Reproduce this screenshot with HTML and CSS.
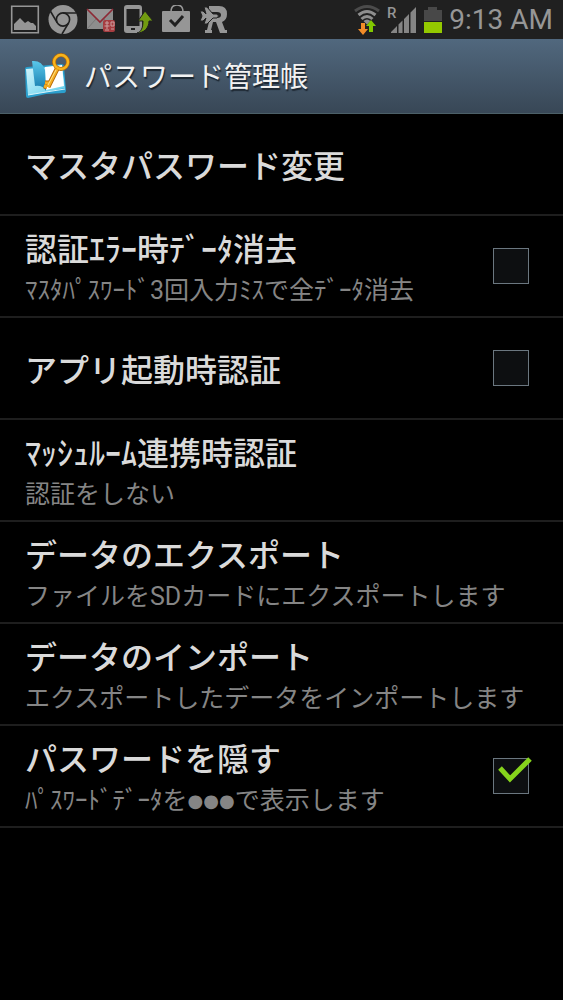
FILE: index.html
```html
<!DOCTYPE html>
<html lang="ja">
<head>
<meta charset="utf-8">
<meta name="viewport" content="width=device-width, initial-scale=1">
<title>パスワード管理帳</title>
<link rel="stylesheet" href="styles.css">
</head>
<body>
<div class="statusbar">
  <div class="notifications">
    <svg width="30" height="30" viewBox="0 0 30 30" aria-hidden="true"><path d="M1.7 1.200h26.600v26.600H1.700z" fill="none" stroke="#969696" stroke-width="1.6"/><path d="M4 25v-6l6-6 5 5 3-2 3 2h2l3 3v4z" fill="#969696"/></svg>
    <svg width="30" height="30" viewBox="0 0 30 30" aria-hidden="true"><circle cx="15" cy="14.500" r="14.500" fill="#969696"/><g fill="none" stroke="#202020" stroke-width="1.6"><circle cx="15" cy="14.500" r="6.600"/><path d="M15 8h13.500M9.300 17.800 2.600 6.500M20.700 17.800 14 29"/></g><circle cx="15" cy="14.500" r="4.600" fill="#969696"/></svg>
    <svg width="30" height="30" viewBox="0 0 30 30" aria-hidden="true"><path d="M1 4h26v20H1z" fill="#8d8d8d"/><path d="m1 24 9-10M27 24l-9-10" stroke="#777" fill="none"/><path d="m1 4 13 13L27 4" fill="#979797" stroke="#8d2935" stroke-width="1.6"/><rect x="17" y="15" width="12" height="12" rx="2" fill="#a63c40"/><path d="M19 18h4M21 16v8M18.500 21h5M19 25h4M25 17h3v4h-3zM25 24h3" stroke="#c9a0a0" fill="none"/></svg>
    <svg width="30" height="30" viewBox="0 0 30 30" aria-hidden="true"><path d="M3 0h12q3 0 3 3v22q0 3-3 3H3q-3 0-3-3V3q0-3 3-3zM2.500 4v17h13V4z" fill="#969696" fill-rule="evenodd"/><path d="M7 24h4" stroke="#202020" stroke-width="2"/><path d="M13 28c4-1 6-5 6-12h-5l7-10 8 10h-4c0 7-5 12-12 12z" fill="#719b10" stroke="#202020"/></svg>
    <svg width="30" height="30" viewBox="0 0 30 30" aria-hidden="true"><path d="M9 7q0-7 6-7t6 7" fill="none" stroke="#969696" stroke-width="1.5"/><rect x="0" y="6" width="28" height="21" rx="1" fill="#969696"/><path d="m8 15 5 5 8-9" fill="none" stroke="#202020" stroke-width="3"/></svg>
    <svg width="30" height="30" viewBox="0 0 30 30" aria-hidden="true"><path d="M9 1h10q8 0 8 8 0 6-5 8l3 8h2v3h-7l-4-11h-3l-2 8h1v3H5v-3h2l3-12h7q4 0 4-3t-4-3H9z" fill="#969696"/><path d="M0 6h3l3 3-2-7h3l6 7h4q3 2 0 4h-4l-6 6H4l2-6-3 3H0l2-5z" fill="#969696" stroke="#202020"/></svg>
  </div>
  <div class="system">
    <svg width="28" height="32" viewBox="0 0 28 32" aria-hidden="true"><g fill="none" stroke-width="3"><path d="M2 7q12-9 24 0" stroke="#4b4b4b"/><path d="M5.500 11q8.500-7 17 0" stroke="#8e8e8e"/><path d="M8.500 15q5.500-5 11 0" stroke="#8e8e8e"/></g><path d="M10.500 17q3.500-3 7 0L14 20.500z" fill="#8e8e8e"/><path d="M8 19h4v6h3l-5 6-5-6h3z" fill="#f28c28"/><path d="M16 28h4v-6h3l-5-6-5 6h3z" fill="#82c800"/></svg>
    <svg class="signal" width="30" height="32" viewBox="0 0 30 32" aria-hidden="true"><text x="0" y="14" class="roaming">R</text><path d="M4 29v-1l6-6v7zM11.500 29v-8.500l4-4V29zM17 29V15l5-5v19zM23.500 29V8.500L29 3v26z" fill="#858585"/></svg>
    <svg width="20" height="32" viewBox="0 0 20 32" aria-hidden="true"><path d="M5 3h9v3h5v11H1V6h4z" fill="#484848"/><path d="M1 18h18v11H1z" fill="#94c900"/></svg>
    <time class="clock">9:13 AM</time>
  </div>
</div>
<header class="appbar">
  <svg width="48" height="48" viewBox="0 0 48 48" aria-hidden="true">
    <defs><linearGradient id="page" x2="1" y2="1"><stop stop-color="#d5f5fb"/><stop offset="1" stop-color="#5bcdec"/></linearGradient><linearGradient id="leaf" y2="1" x2="0"><stop stop-color="#5ac8ea"/><stop offset="1" stop-color="#1479ac"/></linearGradient></defs>
    <path d="m3 15 34-3q3 0 3 3l2 23q0 3-2 3l-18 1-18 4q-2 0-2-2L1 17q0-2 2-2z" fill="#2b9fcd"/>
    <path d="m2 17 36-3 3 22-19 4-18 3z" fill="url(#page)"/>
    <path d="m4 43 18-3 19-3" fill="none" stroke="#d9f4fb"/>
    <path d="m21 15 17-2 2 21-18 4z" fill="#fff"/>
    <path d="M8 9q10-1 13 9l1 21q-3-6-11-5z" fill="url(#leaf)"/>
    <g fill="none" stroke-linejoin="round"><circle cx="37" cy="10" r="7" stroke="#b86908" stroke-width="4"/><path d="m33 17-9 18m1-4-4 0m2 4-3-1" stroke="#b86908" stroke-width="5"/><circle cx="37" cy="10" r="7" stroke="#f8b51c" stroke-width="2.5"/><path d="m33 17-9 18m1-4-4 0m2 4-3-1" stroke="#f5ae22" stroke-width="3"/><path d="m32 18-8 15" stroke="#ffe28a"/></g>
  </svg>
  <h1 class="app-title">パスワード管理帳</h1>
</header>
<main class="settings">
  <button class="row" type="button"><span class="texts"><span class="title">マスタパスワード変更</span></span></button>
  <label class="row"><span class="texts"><span class="title">認証ｴﾗｰ時ﾃﾞｰﾀ消去</span><span class="summary">ﾏｽﾀﾊﾟｽﾜｰﾄﾞ3回入力ﾐｽで全ﾃﾞｰﾀ消去</span></span><input class="check" type="checkbox"></label>
  <label class="row"><span class="texts"><span class="title">アプリ起動時認証</span></span><input class="check" type="checkbox"></label>
  <button class="row" type="button"><span class="texts"><span class="title">ﾏｯｼｭﾙｰﾑ連携時認証</span><span class="summary">認証をしない</span></span></button>
  <button class="row" type="button"><span class="texts"><span class="title">データのエクスポート</span><span class="summary">ファイルをSDカードにエクスポートします</span></span></button>
  <button class="row" type="button"><span class="texts"><span class="title">データのインポート</span><span class="summary">エクスポートしたデータをインポートします</span></span></button>
  <div class="row"><label class="texts" for="hide"><span class="title">パスワードを隠す</span><span class="summary">ﾊﾟｽﾜｰﾄﾞﾃﾞｰﾀを<span class="dots">●●●</span>で表示します</span></label><span class="checkwrap"><input class="check" id="hide" type="checkbox" checked><svg class="tick" width="36" height="28" viewBox="0 0 36 28" aria-hidden="true"><path d="m3 12 10 11L33 3" fill="none" stroke="#86d41c" stroke-width="5"/></svg></span></div>
</main>
</body>
</html>
```
FILE: styles.css
```css
* { box-sizing: border-box; }
body {
  margin: 0;
  min-height: 100vh;
  background: #000;
  color: #dadada;
  font-family: Roboto, "Noto Sans CJK JP", sans-serif;
}
svg { display: block; flex: none; }
.statusbar {
  display: flex;
  justify-content: space-between;
  align-items: center;
  height: 39px;
  padding: 0 10px;
  background: #202020;
}
.notifications { display: flex; gap: 8px; }
.system { display: flex; align-items: center; gap: 6px; }
.roaming { font: 500 15px Roboto, sans-serif; fill: #969696; }
.signal { overflow: visible; }
.clock {
  color: #969696;
  font-size: 28px;
  line-height: 38px;
  white-space: nowrap;
}
.appbar {
  display: flex;
  align-items: center;
  gap: 12px;
  height: 75px;
  padding: 0 24px;
  background: linear-gradient(#51687e, #384756);
  border-bottom: 1px solid #4c6068;
}
.app-title {
  margin: 0;
  padding-top: 4px;
  color: #f2f2f2;
  font-size: 28px;
  font-weight: 400;
  line-height: 40px;
  text-shadow: 1px 2px 1px #1c2630;
}
.settings { display: flex; flex-direction: column; }
.row {
  display: flex;
  align-items: center;
  justify-content: space-between;
  width: 100%;
  min-height: 102px;
  margin: 0;
  padding: 0 34px 0 25px;
  border: 0;
  border-bottom: 2px solid #1e1e1e;
  background: none;
  color: inherit;
  font: inherit;
  text-align: left;
}
.texts { display: flex; flex-direction: column; padding-top: 6px; }
.title {
  font-size: 32px;
  font-weight: 500;
  line-height: 44px;
  white-space: nowrap;
}
.summary {
  color: #858585;
  font-size: 25px;
  line-height: 38px;
  white-space: nowrap;
}
.dots {
  font-family: "DejaVu Sans", sans-serif;
  font-size: 18px;
  line-height: 1;
  vertical-align: 2px;
}
.checkwrap { position: relative; display: block; }
.check {
  appearance: none;
  display: block;
  flex: none;
  width: 36px;
  height: 36px;
  margin: 0;
  background: #0d0f11;
  border: 1px solid #6b7780;
}
.tick { position: absolute; left: 4px; top: -2px; pointer-events: none; }
```
